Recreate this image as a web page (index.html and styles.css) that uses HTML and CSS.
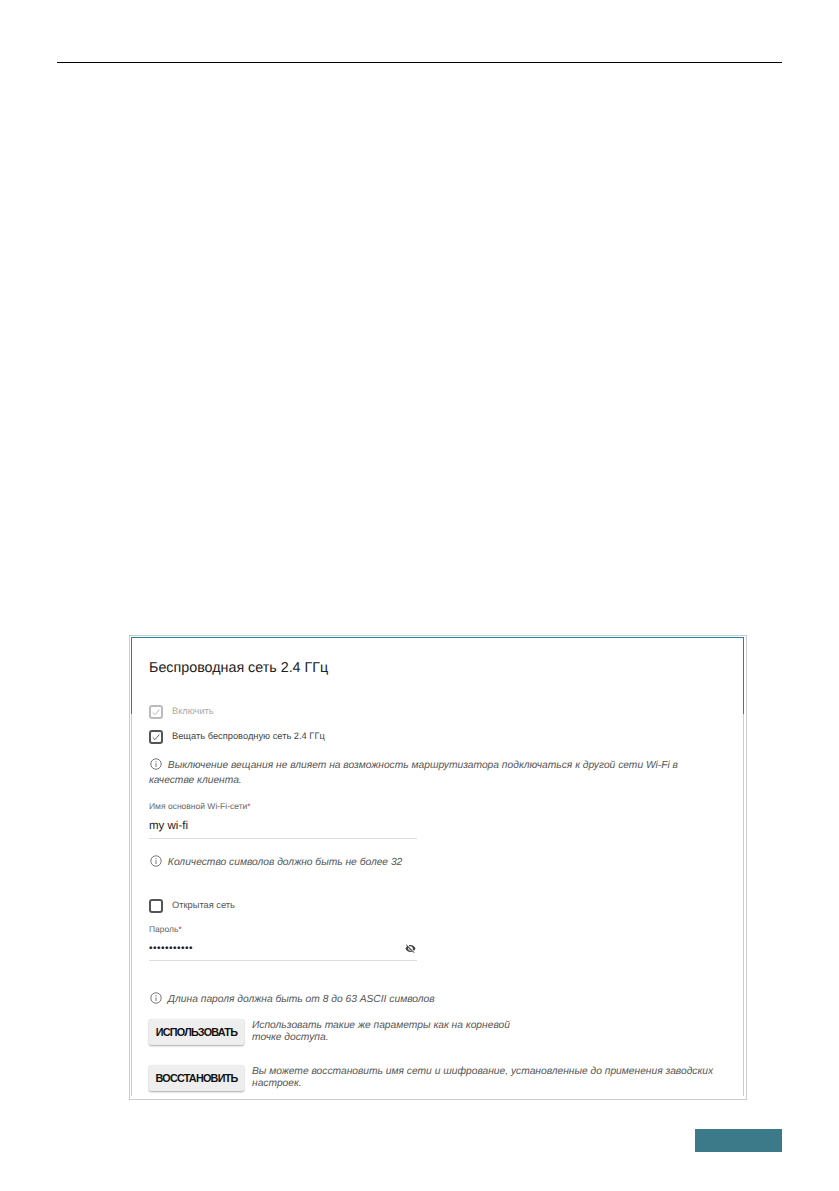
FILE: index.html
```html
<!DOCTYPE html>
<html lang="ru">

<head>
  <meta charset="utf-8">
  <title>Беспроводная сеть 2.4 ГГц</title>
  <link rel="stylesheet" href="styles.css">
</head>

<body>
  <div class="page">
    <div class="head-rule"></div>

    <div class="shot">
      <div class="panel">
        <h1 class="title">Беспроводная сеть 2.4 ГГц</h1>

        <label class="check check-off">
          <span class="box"><svg viewBox="0 0 12 12"><path d="M2 6.4 4.8 9.2 10 3"/></svg></span>
          Включить
        </label>
        <label class="check check-on">
          <span class="box"><svg viewBox="0 0 12 12"><path d="M2 6.4 4.8 9.2 10 3"/></svg></span>
          Вещать беспроводную сеть 2.4 ГГц
        </label>

        <p class="hint hint-wrap">
          <svg class="info" viewBox="0 0 12 12"><circle cx="6" cy="6" r="5.2"/><path d="M6 5.2V9M6 3v1.2"/></svg>
          Выключение вещания не влияет на возможность маршрутизатора подключаться к другой сети Wi-Fi в качестве клиента.
        </p>

        <div class="field field-name">
          <div class="field-label">Имя основной Wi-Fi-сети<span class="req">*</span></div>
          <div class="field-value">my wi-fi</div>
        </div>

        <p class="hint hint-count">
          <svg class="info" viewBox="0 0 12 12"><circle cx="6" cy="6" r="5.2"/><path d="M6 5.2V9M6 3v1.2"/></svg>
          Количество символов должно быть не более 32
        </p>

        <label class="check check-open">
          <span class="box"></span>
          Открытая сеть
        </label>

        <div class="field field-pass">
          <div class="field-label">Пароль<span class="req">*</span></div>
          <div class="field-value">
            <span class="dots">•••••••••••</span>
            <svg class="eye" viewBox="0 0 24 24"><path d="M12 7c2.8 0 5 2.2 5 5 0 .6-.1 1.3-.4 1.800l2.900 2.900c1.500-1.300 2.700-2.900 3.400-4.700C21.200 7.600 17 4.500 12 4.500c-1.400 0-2.700.3-4 .7l2.200 2.200c.5-.3 1.200-.4 1.800-.4zM2 4.300l2.300 2.300.5.500C3.100 8.400 1.800 10.100 1 12c1.700 4.400 6 7.500 11 7.500 1.500 0 3-.3 4.400-.8l.4.4 2.900 2.900 1.300-1.300L3.300 3 2 4.300zm5.500 5.500 1.600 1.600c0 .2-.1.400-.1.600 0 1.700 1.300 3 3 3 .2 0 .4 0 .6-.1l1.600 1.600c-.7.300-1.400.5-2.200.5-2.800 0-5-2.200-5-5 0-.8.200-1.500.5-2.200z"/></svg>
          </div>
        </div>

        <p class="hint hint-pass">
          <svg class="info" viewBox="0 0 12 12"><circle cx="6" cy="6" r="5.2"/><path d="M6 5.2V9M6 3v1.2"/></svg>
          Длина пароля должна быть от 8 до 63 ASCII символов
        </p>

        <div class="action action-use">
          <button class="button">Использовать</button>
          <p class="action-text action-text-short">Использовать такие же параметры как на корневой точке доступа.</p>
        </div>

        <div class="action action-restore">
          <button class="button">Восстановить</button>
          <p class="action-text">Вы можете восстановить имя сети и шифрование, установленные до применения заводских настроек.</p>
        </div>
      </div>
    </div>

    <div class="foot">
      <div class="foot-tab"></div>
    </div>
  </div>
</body>

</html>
```

FILE: styles.css
```css
* {
  box-sizing: border-box;
}

html,
body {
  background-color: #fff;
  margin: 0;
}

body {
  font-family: "Liberation Sans", Arial, sans-serif;
  text-rendering: geometricPrecision;
}

.page {
  height: 1191px;
  padding: 62px 57px 0;
  overflow: hidden;
}

.head-rule {
  height: 1px;
  background-color: #000;
}

.shot {
  position: relative;
  width: 618px;
  height: 465px;
  margin: 572px 0 0 72px;
  border: 1px solid #ccc;
  padding: 1px 2px 3px 1px;
}

.shot::before {
  content: "";
  position: absolute;
  top: 1px;
  left: 1px;
  right: 2px;
  height: 76px;
  border: solid #1b86a0;
  border-width: 1px 1px 0;
  pointer-events: none;
}

.panel {
  height: 100%;
  border: solid #ccc;
  border-width: 0 1px;
  padding: 0 17px;
  color: #333;
}

.title {
  margin: 0;
  padding-top: 22px;
  font-size: 14.3px;
  line-height: 18px;
  font-weight: 400;
  color: #222;
}

.check {
  display: flex;
  align-items: center;
  gap: 9px;
  font-size: 9.3px;
  line-height: 15px;
  color: #444;
}

.check-off {
  margin-top: 27px;
  color: #aaa;
}

.check-on {
  margin-top: 10px;
}

.check-open {
  margin-top: 28px;
  color: #555;
}

.box {
  width: 14px;
  height: 14px;
  flex: none;
  border: 2px solid #555;
  border-radius: 3px;
  display: flex;
  align-items: center;
  justify-content: center;
}

.check-off .box {
  border-color: #bbb;
}

.box svg {
  width: 10px;
  height: 10px;
  fill: none;
  stroke: #444;
  stroke-width: 1;
}

.check-off .box svg {
  stroke: #aaa;
}

.hint {
  margin: 0;
  font-size: 10.25px;
  line-height: 15px;
  font-style: italic;
  color: #555;
}

.hint-wrap {
  margin-top: 14px;
  width: 560px;
}

.hint-count {
  margin-top: 16px;
}

.hint-pass {
  margin-top: 31px;
}

.info {
  width: 12px;
  height: 12px;
  margin: 0 3px 0 1px;
  vertical-align: -2px;
  fill: none;
  stroke: #555;
  stroke-width: .8;
}

.field {
  width: 268px;
  border-bottom: 1px solid #ddd;
}

.field-name {
  margin-top: 13px;
}

.field-pass {
  margin-top: 11px;
}

.field-label {
  font-size: 8.5px;
  line-height: 10px;
  color: #666;
}

.req {
  color: #d33;
}

.field-value {
  display: flex;
  align-items: center;
  justify-content: space-between;
  height: 29px;
  padding-top: 2px;
  font-size: 11px;
  color: #222;
}

.field-name .field-value {
  font-size: 11.5px;
  height: 27px;
}

.field-pass .field-value {
  height: 26px;
}

.dots {
  font-size: 10px;
  letter-spacing: .5px;
}

.eye {
  width: 11px;
  height: 11px;
  margin: 0 1px 0 0;
  fill: #444;
}

.action {
  display: flex;
  gap: 8px;
  align-items: flex-start;
}

.action-use {
  margin-top: 12px;
}

.action-restore {
  margin-top: 20px;
}

.button {
  width: 95px;
  height: 26px;
  flex: none;
  padding: 0;
  border: 0;
  border-radius: 2px;
  background-color: #eee;
  box-shadow: 0 1px 2px rgba(0, 0, 0, .35);
  font-family: inherit;
  font-size: 10.8px;
  font-weight: 700;
  letter-spacing: -.75px;
  text-transform: uppercase;
  color: #111;
}

.action-text {
  margin: 0;
  padding-top: 1px;
  width: 470px;
  font-size: 10.25px;
  line-height: 12px;
  font-style: italic;
  color: #555;
}

.action-text-short {
  width: 280px;
}

.foot {
  display: flex;
  justify-content: flex-end;
  margin-top: 29px;
}

.foot-tab {
  width: 87px;
  height: 23px;
  background-color: #3c7a89;
}
```
